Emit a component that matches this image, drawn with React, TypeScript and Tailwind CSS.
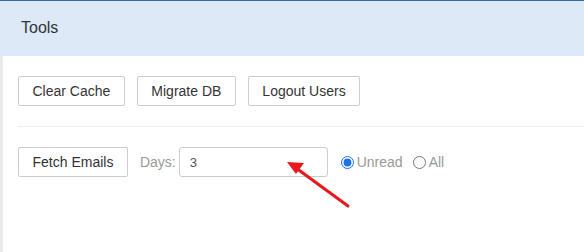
import { useState } from "react";

const ToolButton = ({ label }: { label: string }) => (
  <button className="h-[30px] px-[13.5px] border border-[#cccccc] rounded-[2px] bg-white text-[14px] text-[#333333] leading-none">
    {label}
  </button>
);

const App = () => {
  const [days, setDays] = useState("3");
  const [filter, setFilter] = useState("unread");

  return (
    <div className="w-[584px] h-[252px] overflow-hidden bg-white font-['Liberation_Sans',Arial,sans-serif] relative">
      <div className="h-[56px] border-t border-[#2e6da4] bg-[#dde9f7] flex items-center pl-[21px] pb-[1px]">
        <h3 className="text-[16px] text-[#333333]">Tools</h3>
      </div>
      <div className="h-[196px] border-l-[3px] border-[#e9e9e9] pl-[15px] pt-[20px]">
        <div className="flex gap-3">
          <ToolButton label="Clear Cache" />
          <ToolButton label="Migrate DB" />
          <ToolButton label="Logout Users" />
        </div>
        <div className="mt-[20px] border-t border-[#eeeeee]" />
        <div className="mt-[20px] flex items-center">
          <ToolButton label="Fetch Emails" />
          <span className="ml-3 text-[14px] text-[#999999]">Days:</span>
          <input
            value={days}
            onChange={(e) => setDays(e.target.value)}
            className="ml-[3px] w-[149px] h-[30px] border border-[#cccccc] rounded-[3px] px-[10px] text-[13px] text-[#555555] outline-none"
          />
          <label className="ml-[13px] flex items-center gap-[3px] text-[14px] text-[#999999]">
            <input
              type="radio"
              name="filter"
              checked={filter === "unread"}
              onChange={() => setFilter("unread")}
              className="m-0 w-[13px] h-[13px] accent-[#1a73e8]"
            />
            Unread
          </label>
          <label className="ml-[10px] flex items-center gap-[3px] text-[14px] text-[#999999]">
            <input
              type="radio"
              name="filter"
              checked={filter === "all"}
              onChange={() => setFilter("all")}
              className="m-0 w-[13px] h-[13px]"
            />
            All
          </label>
        </div>
      </div>
      <svg className="absolute left-0 top-0 pointer-events-none" width="584" height="252">
        <line x1="348" y1="206" x2="296" y2="168" stroke="#e8191b" strokeWidth="3" strokeLinecap="round" />
        <polygon points="287,162 304,163 296,174" fill="#e8191b" />
      </svg>
    </div>
  );
};

export default App;
